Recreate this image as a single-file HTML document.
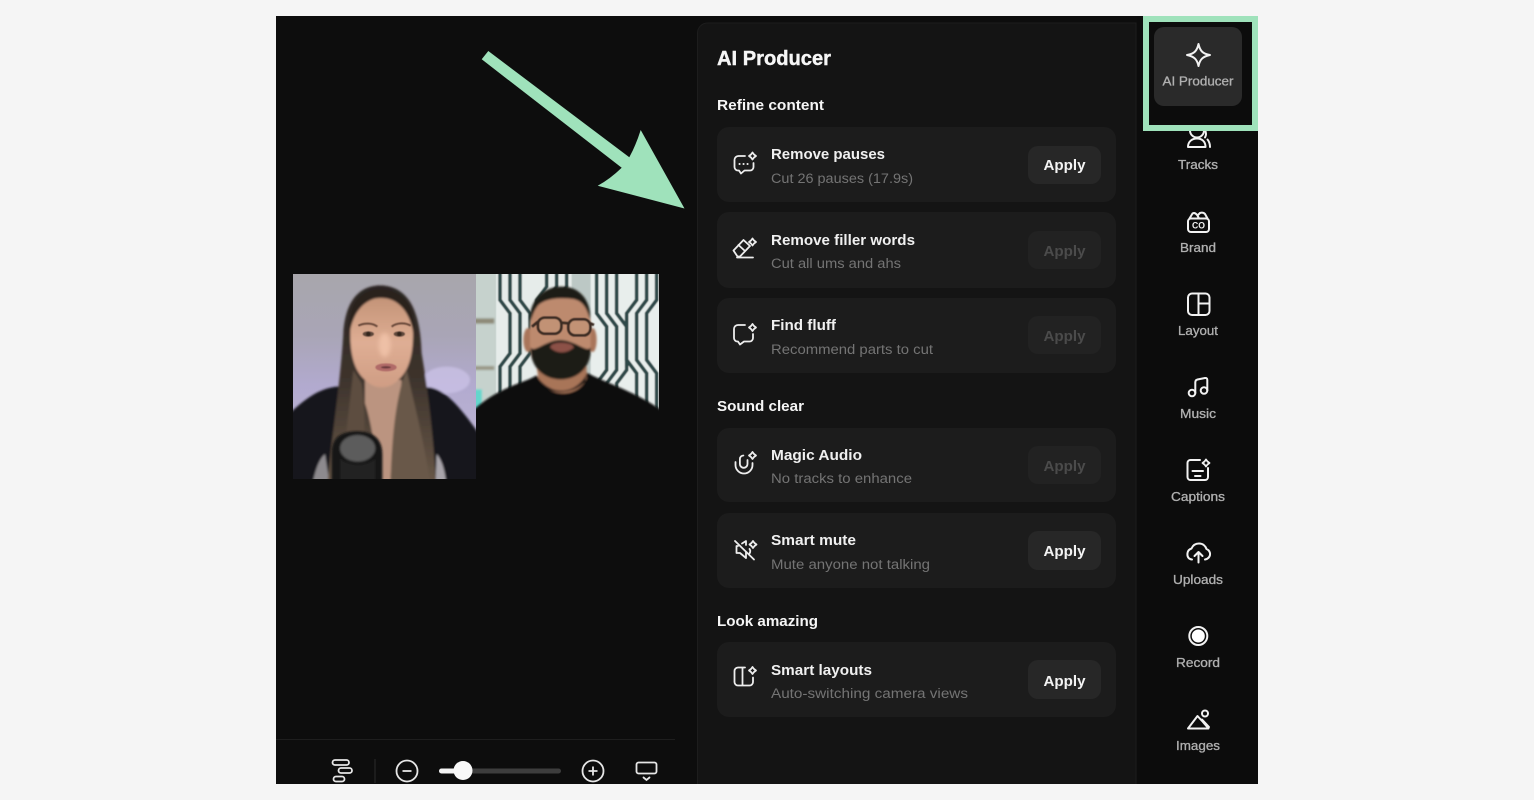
<!DOCTYPE html>
<html><head><meta charset="utf-8"><title>AI Producer</title>
<style>
html,body{margin:0;padding:0;background:#f5f5f5;width:1534px;height:800px;overflow:hidden}
svg{display:block}
text{font-family:"Liberation Sans",sans-serif}
.h{font-weight:700;fill:#f6f6f6}
.t{font-weight:700;fill:#f0f0f0;font-size:14.500px}
.s{fill:#747474;font-size:13.500px}
.a{font-weight:700;font-size:15px;text-anchor:middle;fill:#f4f4f4}
.d{fill:#4b4b4b}
.l{font-size:12.500px;fill:#b0b0b0;text-anchor:middle;stroke:#b0b0b0;stroke-width:.3}
.i{fill:none;stroke:#ededed;stroke-width:1.800;stroke-linecap:round;stroke-linejoin:round}
.r{fill:none;stroke:#f2f2f2;stroke-width:2;stroke-linecap:round;stroke-linejoin:round}
.c{fill:#1c1c1c}
.b{fill:#272727}
.bd{fill:#222222}
</style></head><body>
<svg width="1534" height="800" viewBox="0 0 1534 800" xmlns="http://www.w3.org/2000/svg">
<defs>
<clipPath id="frame"><rect x="276" y="16" width="982" height="768"/></clipPath>
<clipPath id="pl"><rect x="9" y="12" width="549" height="615"/></clipPath>
<clipPath id="pr"><rect x="18" y="12" width="549" height="615"/></clipPath>
<filter id="soft" x="-10%" y="-10%" width="120%" height="120%"><feGaussianBlur stdDeviation="3"/></filter>
<filter id="soft2" x="-10%" y="-10%" width="120%" height="120%"><feGaussianBlur stdDeviation="1.600"/></filter>
<filter id="soft3" x="-30%" y="-30%" width="160%" height="160%"><feGaussianBlur stdDeviation="6"/></filter>
<linearGradient id="bgl" x1="0" y1="0" x2="0" y2="1"><stop offset="0" stop-color="#a8a6ac"/><stop offset=".3" stop-color="#a9a5b6"/><stop offset=".55" stop-color="#b2aacf"/><stop offset="1" stop-color="#c4bcd8"/></linearGradient>
<linearGradient id="hair" x1="0" y1="0" x2="0" y2="1"><stop offset="0" stop-color="#2a2421"/><stop offset=".45" stop-color="#3e342d"/><stop offset="1" stop-color="#6e5c4b"/></linearGradient>
<linearGradient id="face" x1="0" y1="0" x2="0" y2="1"><stop offset="0" stop-color="#c49478"/><stop offset=".5" stop-color="#dfae94"/><stop offset="1" stop-color="#cf9d84"/></linearGradient>
</defs>
<rect width="1534" height="800" fill="#f5f5f5"/>
<g clip-path="url(#frame)">
<rect x="276" y="16" width="982" height="768" fill="#0d0d0d"/>
<!-- panel -->
<path d="M697.500 800V33a10 10 0 0 1 10-10H1136V800Z" fill="#141414" stroke="#1d1d1d"/>
<rect x="1137" y="16" width="121" height="768" fill="#0c0c0c"/>
<line x1="276" y1="739.500" x2="675" y2="739.500" stroke="#1e1e1e"/>

<!-- left photo -->
<g transform="translate(290 270) scale(.33333)"><g clip-path="url(#pl)">
<rect x="9" y="12" width="549" height="615" fill="url(#bgl)"/>
<g filter="url(#soft)">
<ellipse cx="470" cy="330" rx="70" ry="40" fill="#cdc5e8" opacity=".7"/>
<path d="M-30 460C40 385 90 355 140 350L420 352C470 360 520 420 600 540V680H-30Z" fill="#17141a"/>
<path d="M60 680C75 590 90 565 105 552L125 680Z" fill="#8d8a8e"/>
<path d="M435 680L440 552C455 570 468 600 472 680Z" fill="#a9a5ab"/>
<path d="M270 46C195 48 165 110 160 190C155 280 140 400 125 520L108 680H440C432 500 412 350 395 250C392 150 370 48 270 46Z" fill="url(#hair)"/>
<path d="M225 330H335L330 400C318 470 305 560 298 680H262C262 560 245 460 225 400Z" fill="#bb9480"/>
<path d="M190 300C180 400 165 500 150 680H215C225 520 228 430 215 340Z" fill="#5d4d40"/>
<path d="M350 300C372 400 400 500 428 680H300C305 520 312 430 335 340Z" fill="#695849"/>
<path d="M181 190C181 120 225 84 272 84C325 84 369 120 369 190C369 260 355 300 330 325C310 345 295 352 275 352C255 352 240 345 220 325C195 300 181 260 181 190Z" fill="url(#face)"/>
<path d="M178 200C186 120 230 85 272 82C325 85 362 125 372 200C380 100 330 60 270 58C210 60 170 105 178 200Z" fill="#29231f"/>
</g>
<g filter="url(#soft2)">
<path d="M205 167C225 157 250 160 262 170" stroke="#6a4a3b" stroke-width="6" fill="none"/>
<path d="M305 170C320 158 345 157 362 167" stroke="#6a4a3b" stroke-width="6" fill="none"/>
<ellipse cx="235" cy="192" rx="17" ry="8" fill="#5d463b"/>
<ellipse cx="328" cy="192" rx="17" ry="8" fill="#5d463b"/>
<ellipse cx="235" cy="192" rx="7" ry="7" fill="#33251f"/>
<ellipse cx="328" cy="192" rx="7" ry="7" fill="#33251f"/>
<ellipse cx="288" cy="292" rx="32" ry="12" fill="#b06a68"/>
<ellipse cx="288" cy="292" rx="15" ry="3.500" fill="#6a3a3c"/>
</g>
<ellipse cx="284" cy="225" rx="18" ry="36" fill="#eec0a6" filter="url(#soft3)"/>
<g filter="url(#soft)">
<path d="M125 680V550C125 505 150 484 200 484C255 484 277 510 277 555V680Z" fill="#171717"/>
<ellipse cx="203" cy="535" rx="53" ry="40" fill="#5b5b5b"/>
<path d="M150 565C175 590 235 590 256 565V680H150Z" fill="#232323"/>
</g>
</g></g>

<!-- right photo -->
<g transform="translate(470 270) scale(.33333)"><g clip-path="url(#pr)">
<rect x="18" y="12" width="549" height="615" fill="#bcc8c5"/>
<g filter="url(#soft)">
<rect x="10" y="0" width="68" height="430" fill="#c6d2cd"/>
<rect x="10" y="145" width="63" height="16" fill="#8d8a78"/>
<rect x="10" y="288" width="63" height="12" fill="#9a9886"/>
<rect x="10" y="358" width="26" height="70" fill="#64d6cc"/>
</g>
<g filter="url(#soft2)">
<rect x="78" y="0" width="227" height="370" fill="#e6ecea"/>
<rect x="362" y="0" width="210" height="420" fill="#e8eeec"/>
<g fill="none" stroke="#2e4a48" stroke-width="11">
<path d="M90 0V90L120 130V250L90 290V370"/>
<path d="M120 0V90L150 130V250L120 290V370"/>
<path d="M150 0V90L180 130V250L150 290V370"/>
<path d="M290 0V50L260 90V210L290 250V370"/>
<path d="M260 0V50L230 90V210L260 250V370"/>
<path d="M230 0V50L200 90V210L230 250V370"/>
<path d="M380 0V130L410 170V300L380 340V420"/>
<path d="M410 0V130L440 170V300L410 340V420"/>
<path d="M440 0V130L470 170V300L440 340V420"/>
<path d="M560 0V90L530 130V270L560 310V420"/>
<path d="M530 0V90L500 130V270L530 310V420"/>
<path d="M500 0V90L470 130V270L500 310V420"/>
</g>
</g>
<g filter="url(#soft)">
<path d="M-20 450C70 352 150 345 200 316C245 385 310 385 350 308C420 345 510 368 600 440V680H-20Z" fill="#0c0c0c"/>
<path d="M200 290H350V325C325 385 235 385 205 325Z" fill="#a87458"/>
<path d="M210 340C240 375 310 375 345 335L350 312C315 378 240 378 200 318Z" fill="#181412"/>
<ellipse cx="174" cy="210" rx="14" ry="36" fill="#a9755a"/>
<ellipse cx="368" cy="210" rx="12" ry="36" fill="#a9755a"/>
<path d="M180 170C180 90 225 72 272 72C320 72 362 90 362 170V230C362 290 320 320 272 320C225 320 180 290 180 230Z" fill="#bd8a6e"/>
<path d="M180 155C175 85 230 46 278 50C330 50 365 95 360 150C350 110 335 88 300 86C260 82 215 88 200 112C190 125 188 140 180 155Z" fill="#1d1a18"/>
<path d="M182 232C192 250 225 212 270 210C320 212 350 250 362 232C365 290 325 328 272 328C220 328 180 290 182 232Z" fill="#1f1a18"/>
<path d="M240 232C260 252 290 252 312 232L305 224C285 216 260 216 245 224Z" fill="#8c5147"/>
</g>
<g fill="none" stroke="#3a2a22" stroke-width="8" filter="url(#soft2)">
<rect x="204" y="143" width="70" height="48" rx="20" fill="#c79a7e" fill-opacity=".5"/>
<rect x="295" y="148" width="66" height="48" rx="20" fill="#c79a7e" fill-opacity=".5"/>
<path d="M274 158L295 160M204 155L186 170M361 160L372 165"/>
</g>
</g></g>

<!-- arrow -->
<path d="M488.300 51L481.700 59.300L621.700 167.700Q610 179 597.700 185.700L684.500 208.500L640.700 130Q636 145 629.300 157.300Z" fill="#9fe2bb"/>

<!-- panel text -->
<text class="h" x="717" y="65" font-size="20" textLength="114" lengthAdjust="spacingAndGlyphs" stroke="#f6f6f6" stroke-width=".4">AI Producer</text>
<text class="h" x="717" y="110" font-size="14.500" textLength="107" lengthAdjust="spacingAndGlyphs">Refine content</text>
<text class="h" x="717" y="411" font-size="14.500" textLength="87" lengthAdjust="spacingAndGlyphs">Sound clear</text>
<text class="h" x="717" y="626" font-size="14.500" textLength="101" lengthAdjust="spacingAndGlyphs">Look amazing</text>

<!-- cards -->
<rect class="c" x="717" y="127" width="399" height="75" rx="12"/>
<rect class="c" x="717" y="212" width="399" height="76" rx="12"/>
<rect class="c" x="717" y="298" width="399" height="75" rx="12"/>
<rect class="c" x="717" y="428" width="399" height="74" rx="12"/>
<rect class="c" x="717" y="513" width="399" height="75" rx="12"/>
<rect class="c" x="717" y="642" width="399" height="75" rx="12"/>

<rect class="b" x="1028" y="146" width="73" height="38" rx="10"/>
<rect class="bd" x="1028" y="231" width="73" height="38" rx="10"/>
<rect class="bd" x="1028" y="316" width="73" height="38" rx="10"/>
<rect class="bd" x="1028" y="446" width="73" height="38" rx="10"/>
<rect class="b" x="1028" y="531" width="73" height="39" rx="10"/>
<rect class="b" x="1028" y="660" width="73" height="39" rx="10"/>
<text class="a" x="1064.500" y="170" textLength="42" lengthAdjust="spacingAndGlyphs">Apply</text>
<text class="a d" x="1064.500" y="256" textLength="42" lengthAdjust="spacingAndGlyphs">Apply</text>
<text class="a d" x="1064.500" y="341" textLength="42" lengthAdjust="spacingAndGlyphs">Apply</text>
<text class="a d" x="1064.500" y="471" textLength="42" lengthAdjust="spacingAndGlyphs">Apply</text>
<text class="a" x="1064.500" y="556" textLength="42" lengthAdjust="spacingAndGlyphs">Apply</text>
<text class="a" x="1064.500" y="686" textLength="42" lengthAdjust="spacingAndGlyphs">Apply</text>

<text class="t" x="771" y="159" textLength="114" lengthAdjust="spacingAndGlyphs">Remove pauses</text>
<text class="s" x="771" y="183" textLength="142" lengthAdjust="spacingAndGlyphs">Cut 26 pauses (17.9s)</text>
<text class="t" x="771" y="245" textLength="144" lengthAdjust="spacingAndGlyphs">Remove filler words</text>
<text class="s" x="771" y="268" textLength="130" lengthAdjust="spacingAndGlyphs">Cut all ums and ahs</text>
<text class="t" x="771" y="330" textLength="65" lengthAdjust="spacingAndGlyphs">Find fluff</text>
<text class="s" x="771" y="354" textLength="162" lengthAdjust="spacingAndGlyphs">Recommend parts to cut</text>
<text class="t" x="771" y="460" textLength="91" lengthAdjust="spacingAndGlyphs">Magic Audio</text>
<text class="s" x="771" y="483" textLength="141" lengthAdjust="spacingAndGlyphs">No tracks to enhance</text>
<text class="t" x="771" y="545" textLength="85" lengthAdjust="spacingAndGlyphs">Smart mute</text>
<text class="s" x="771" y="569" textLength="159" lengthAdjust="spacingAndGlyphs">Mute anyone not talking</text>
<text class="t" x="771" y="675" textLength="101" lengthAdjust="spacingAndGlyphs">Smart layouts</text>
<text class="s" x="771" y="698" textLength="197" lengthAdjust="spacingAndGlyphs">Auto-switching camera views</text>

<!-- card icons -->
<g class="i">
<path d="M745 156H738.500a4 4 0 0 0-4 4V167a3.500 3.500 0 0 0 3.500 3.500H739L741 173.500L744.500 170.500H750a3.500 3.500 0 0 0 3.500-3.500V163"/>
<path d="M739.500 164h.1M743.500 164h.1M747.500 164h.1" stroke-width="2"/>
<path d="M752.500 152.500L754 154.500L756 156L754 157.500L752.500 159.500L751 157.500L749 156L751 154.500Z" stroke-width="1.800"/>

<path d="M733.500 250.500L743.500 240L750 246L740 256.500H737.500Z"/>
<path d="M738.500 245L745 251"/>
<path d="M737 257.500H753"/>
<path d="M752.500 238.500L754 240.500L756 242L754 243.500L752.500 245.500L751 243.500L749 242L751 240.500Z" stroke-width="1.800"/>

<path d="M745 325H738a4 4 0 0 0-4 4V338a3.500 3.500 0 0 0 3.500 3.500H738L740 344.500L744 341.500H749.500a3.500 3.500 0 0 0 3.500-3.500V334"/>
<path d="M752.500 324L754 326L756 327.500L754 329L752.500 331L751 329L749 327.500L751 326Z" stroke-width="1.800"/>

<path d="M735.500 462V465a8.500 8.500 0 0 0 17 0V463"/>
<path d="M747.500 460V464a3.800 3.800 0 0 1-7.600 0V459a3.500 3.500 0 0 1 3.500-3.500"/>
<path d="M752.500 452L754 454L756 455.500L754 457L752.500 459L751 457L749 455.500L751 454Z" stroke-width="1.800"/>

<path d="M735 541L754 559.500"/>
<path d="M738 546H736.500V553H740L746 558V552M746 545V541L742 543.500"/>
<path d="M749.500 549Q751 551 749.500 553.500"/>
<path d="M753 541L754.500 543L756.500 544.500L754.500 546L753 548L751.500 546L749.500 544.500L751.500 543Z" stroke-width="1.800"/>

<path d="M745 667.500H738a3.500 3.500 0 0 0-3.500 3.500V682a3.500 3.500 0 0 0 3.500 3.500H749.500a3.500 3.500 0 0 0 3.500-3.500V677.500"/>
<path d="M742.500 668V685"/>
<path d="M752.500 667L754 669L756 670.500L754 672L752.500 674L751 672L749 670.500L751 669Z" stroke-width="1.800"/>
</g>

<!-- rail -->
<g class="r">
<circle cx="1197" cy="130.500" r="7"/>
<path d="M1188 147C1188 141.500 1192 138.500 1197 138.500C1202 138.500 1205.500 141.500 1205.500 147Z"/>
<path d="M1205 130Q1207 134 1205 137.500M1207.500 139.500Q1210 142.500 1210 147"/>
</g>
<text class="l" x="1198" y="169" textLength="40" lengthAdjust="spacingAndGlyphs">Tracks</text>

<!-- highlight (opaque interior hides the top of the Tracks icon) -->
<rect x="1146" y="19" width="109" height="109" fill="#0c0c0c" stroke="#9fe2bb" stroke-width="6"/>

<rect x="1154" y="27" width="88" height="79" rx="10" fill="#2a2a2a"/>
<path class="r" d="M1198.500 44C1200 51 1203 54 1210 55C1203 56.500 1200 59 1198.500 66C1197 59 1194 56.500 1187 55C1194 54 1197 51 1198.500 44Z"/>
<text class="l" x="1198" y="85.500" textLength="71" lengthAdjust="spacingAndGlyphs">AI Producer</text>

<g class="r">
<rect x="1188" y="218.500" width="21" height="13.500" rx="3"/>
<path d="M1189.500 218.500L1192.500 213.500Q1195 212 1197.500 215.500L1199 218.500M1197.500 215.500L1200 213Q1203 212 1205 214L1207.500 218.500"/>
</g>
<text x="1198.500" y="228.500" font-size="9" font-weight="700" fill="#f2f2f2" text-anchor="middle" textLength="13" lengthAdjust="spacingAndGlyphs">CO</text>
<text class="l" x="1198" y="252" textLength="36" lengthAdjust="spacingAndGlyphs">Brand</text>

<g class="r">
<rect x="1188" y="293.500" width="21.500" height="21.500" rx="4"/>
<path d="M1198.500 293.500V315M1198.500 303.500H1209.500"/>
</g>
<text class="l" x="1198" y="335" textLength="40" lengthAdjust="spacingAndGlyphs">Layout</text>

<g class="r">
<circle cx="1192" cy="393" r="3.300"/>
<circle cx="1204" cy="390.500" r="3.300"/>
<path d="M1195.300 393V382.500Q1195.300 380 1197.500 379.500L1205 378Q1207.300 377.700 1207.300 380V390.500"/>
</g>
<text class="l" x="1198" y="418" textLength="36" lengthAdjust="spacingAndGlyphs">Music</text>

<g class="r">
<path d="M1200 460H1190.500a3 3 0 0 0-3 3V477a3 3 0 0 0 3 3H1205a3 3 0 0 0 3-3V468"/>
<path d="M1192.500 471H1203M1195 476H1200.500"/>
<path d="M1206 459.500L1207.500 461.500L1209.500 463L1207.500 464.500L1206 466.500L1204.500 464.500L1202.500 463L1204.500 461.500Z" stroke-width="1.800"/>
</g>
<text class="l" x="1198" y="501" textLength="54" lengthAdjust="spacingAndGlyphs">Captions</text>

<g class="r">
<path d="M1192 559.500C1188 559 1187 556 1187.500 553C1188 550 1190 549 1191.500 548.500C1193 545 1196 543.500 1199 543.500C1203 543.500 1205.500 546 1206.500 549C1209 550 1210.500 552.500 1210 555C1209.500 557.500 1207.500 559 1205 559.500"/>
<path d="M1198.500 562.500V552.500M1194.500 556L1198.500 552L1202.500 556"/>
</g>
<text class="l" x="1198" y="584" textLength="50" lengthAdjust="spacingAndGlyphs">Uploads</text>

<circle cx="1198.300" cy="636" r="9" class="r"/>
<circle cx="1198.300" cy="636" r="6.500" fill="#fff"/>
<text class="l" x="1198" y="667" textLength="44" lengthAdjust="spacingAndGlyphs">Record</text>

<g class="r">
<path d="M1188 728.500L1197.500 716L1203 722L1208.500 728.500Z"/>
<path d="M1202 719.500L1209 727"/>
<circle cx="1205" cy="713.500" r="3"/>
</g>
<text class="l" x="1198" y="750" textLength="44" lengthAdjust="spacingAndGlyphs">Images</text>

<!-- bottom toolbar -->
<g fill="none" stroke="#e6e6e6" stroke-width="1.800">
<rect x="332.500" y="760" width="16.500" height="5" rx="2.500"/>
<rect x="338.500" y="768" width="13.500" height="5" rx="2.500"/>
<rect x="333.500" y="776.500" width="11" height="5" rx="2.500"/>
<circle cx="407" cy="771" r="10.500"/>
<path d="M402.500 771H411.500"/>
<circle cx="593" cy="771" r="10.500"/>
<path d="M588.500 771H597.500M593 766.500V775.500"/>
<rect x="636.500" y="762.500" width="20" height="11" rx="2"/>
<path d="M643.500 777.500L646.500 780L649.500 777.500" stroke-linecap="round"/>
</g>
<line x1="375" y1="759" x2="375" y2="783" stroke="#2c2c2c"/>
<rect x="439" y="768.500" width="122" height="5" rx="2.500" fill="#3d3d3d"/>
<rect x="439" y="768.500" width="24" height="5" rx="2.500" fill="#f4f4f4"/>
<circle cx="463" cy="770.500" r="9.500" fill="#f8f8f8"/>
</g>
</svg>
</body></html>
